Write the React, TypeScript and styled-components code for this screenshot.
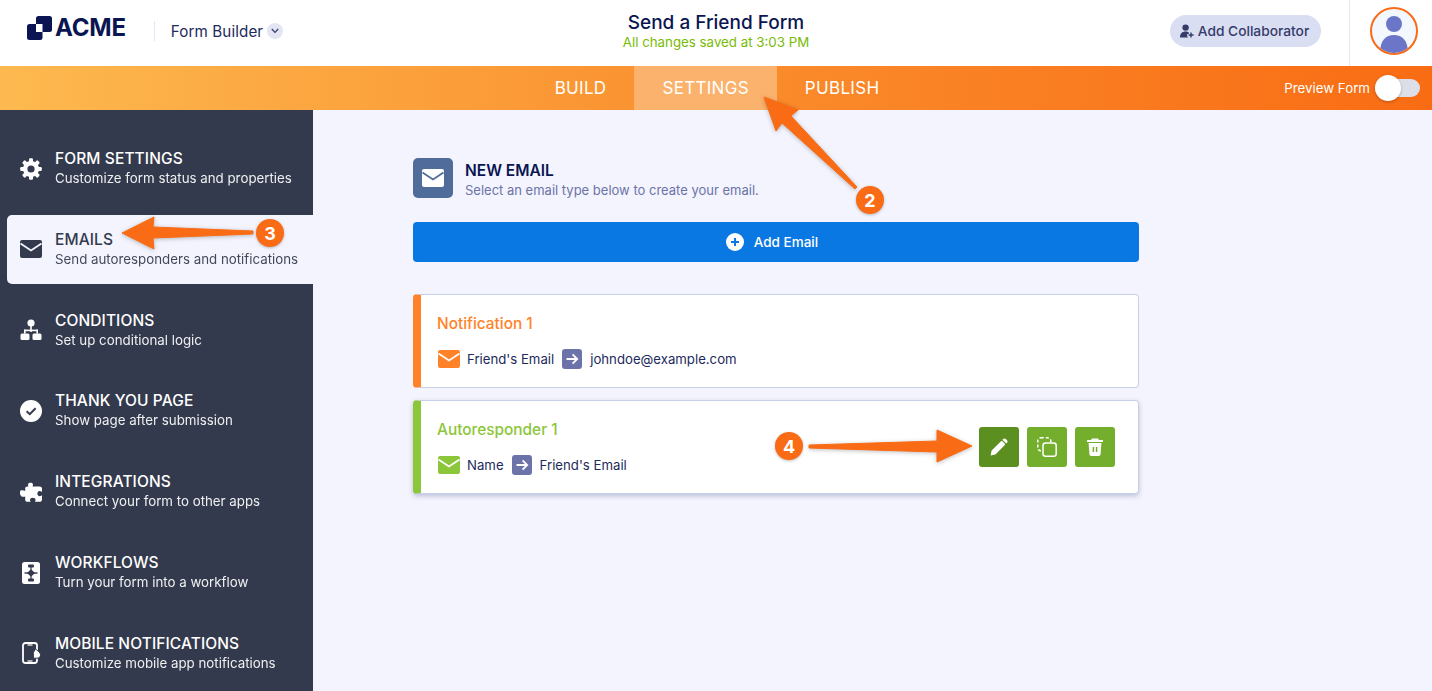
import React from 'react';
import styled, { createGlobalStyle } from 'styled-components';

const GlobalStyle = createGlobalStyle`
  html, body {
    margin: 0;
    padding: 0;
    height: 100%;
    background: #f3f4fd;
    font-family: Inter, "Liberation Sans", sans-serif;
    overflow: hidden;
  }
`;

const Page = styled.div`
  position: relative;
  width: 1432px;
  height: 691px;
  overflow: hidden;
  display: flex;
  flex-direction: column;
`;

/* ---------- header ---------- */

const Header = styled.header`
  height: 66px;
  flex: none;
  background: #fff;
  display: grid;
  grid-template-columns: 1fr auto 1fr;
  align-items: center;
`;

const Brand = styled.div`
  display: flex;
  align-items: center;
  padding: 0 0 4px 27px;
`;

const Logo = styled.div`
  display: flex;
  align-items: center;
  margin-bottom: 6px;
`;

const LogoWord = styled.span`
  font-size: 24px;
  font-weight: 700;
  letter-spacing: -0.2px;
  color: #0a1551;
  margin-left: 3px;
  line-height: 1;
`;

const BrandDivider = styled.span`
  width: 1px;
  height: 20px;
  background: #e3e5f3;
  margin-left: 28px;
`;

const ProductName = styled.span`
  margin-left: 16px;
  font-size: 15.2px;
  letter-spacing: 0.1px;
  color: #1d2a5c;
`;

const Chevron = styled.span`
  margin-left: 4px;
  width: 16px;
  height: 16px;
  border-radius: 50%;
  background: #e3e5f3;
  display: flex;
  align-items: center;
  justify-content: center;
`;

const TitleBlock = styled.div`
  text-align: center;
  padding-bottom: 3px;
`;

const FormTitle = styled.div`
  font-size: 19px;
  font-weight: 500;
  color: #0a1551;
  line-height: 22px;
`;

const SavedNote = styled.div`
  font-size: 13.3px;
  color: #78bb07;
  line-height: 17px;
`;

const HeaderRight = styled.div`
  display: flex;
  justify-content: flex-end;
  align-items: center;
  height: 100%;
`;

const Collaborator = styled.button`
  height: 32px;
  width: 151px;
  margin-bottom: 4px;
  border: 0;
  border-radius: 16px;
  background: #dadef3;
  color: #343c6a;
  font: 500 13.75px Inter, "Liberation Sans", sans-serif;
  display: flex;
  align-items: center;
  justify-content: center;
  gap: 4px;
  padding: 0 2px 0 0;
`;

const AvatarCell = styled.div`
  margin-left: 28px;
  width: 83px;
  height: 100%;
  border-left: 1px solid #e3e5f0;
  display: flex;
  align-items: center;
  justify-content: center;
  padding: 0 0 4px 6px;
  box-sizing: border-box;
`;

const Avatar = styled.div`
  width: 48px;
  height: 48px;
  border-radius: 50%;
  border: 2px solid #f96b14;
  box-sizing: border-box;
  overflow: hidden;
  background: #f3f8ff;
`;

/* ---------- tab bar ---------- */

const TabBar = styled.nav`
  height: 44px;
  flex: none;
  background: linear-gradient(90deg, #fdb94f 0%, #fa8a2a 55%, #f96c14 100%);
  display: grid;
  grid-template-columns: 1fr auto 1fr;
`;

const Tabs = styled.div`
  grid-column: 2;
  display: flex;
  margin-left: 2px;
`;

const Tab = styled.div<{ $active?: boolean }>`
  padding: 0 28px;
  display: flex;
  align-items: center;
  font-size: 17px;
  color: #fff;
  letter-spacing: 0.3px;
  background: ${(p) => (p.$active ? '#fbb26c' : 'transparent')};
`;

const PreviewToggle = styled.div`
  display: flex;
  align-items: center;
  justify-content: flex-end;
  padding-right: 12px;
  gap: 5px;
`;

const PreviewLabel = styled.span`
  font-size: 13.3px;
  color: #fff;
`;

const ToggleTrack = styled.span`
  position: relative;
  width: 45px;
  height: 18px;
  border-radius: 9px;
  background: #dcdfe8;
`;

const ToggleKnob = styled.span`
  position: absolute;
  left: 0;
  top: -4px;
  width: 26px;
  height: 26px;
  border-radius: 50%;
  background: #fff;
  box-shadow: 0 1px 3px rgba(0, 0, 0, 0.25);
`;

/* ---------- body ---------- */

const Body = styled.div`
  flex: 1;
  display: flex;
  min-height: 0;
`;

const Sidebar = styled.aside`
  width: 313px;
  flex: none;
  background: #343a4d;
  padding-top: 24px;
  display: flex;
  flex-direction: column;
  gap: 11.83px;
  box-sizing: border-box;
`;

const SideItem = styled.div<{ $active?: boolean }>`
  height: 69px;
  flex: none;
  margin-left: 7px;
  padding-left: 13px;
  box-sizing: border-box;
  display: flex;
  align-items: center;
  gap: 13px;
  border-radius: 5px 0 0 5px;
  background: ${(p) => (p.$active ? '#f3f4fd' : 'transparent')};
  color: ${(p) => (p.$active ? '#343a4d' : '#fff')};
`;

const SideIcon = styled.span`
  width: 22px;
  height: 22px;
  display: flex;
  align-items: center;
  justify-content: center;
`;

const SideTitle = styled.div`
  font-size: 15.5px;
  font-weight: 500;
  letter-spacing: 0.1px;
  line-height: 20px;
`;

const SideText = styled.div`
  font-size: 13.3px;
  line-height: 19px;
  opacity: 0.92;
`;

const Main = styled.main`
  flex: 1;
  padding: 48px 0 0 100px;
`;

const Column = styled.div`
  width: 726px;
`;

const EmailHead = styled.div`
  height: 40px;
  display: flex;
  align-items: flex-start;
  gap: 12px;
`;

const HeadIcon = styled.div`
  width: 40px;
  height: 40px;
  border-radius: 5px;
  background: #4f6c9b;
  display: flex;
  align-items: center;
  justify-content: center;
`;

const HeadCopy = styled.div`
  padding-top: 3px;
`;

const HeadTitle = styled.div`
  font-size: 15.5px;
  font-weight: 600;
  color: #0a1551;
  line-height: 19px;
`;

const HeadText = styled.div`
  font-size: 13px;
  color: #6c73a8;
  line-height: 20px;
`;

const AddButton = styled.button`
  margin-top: 24px;
  width: 100%;
  height: 40px;
  border: 0;
  padding: 0 8px 0 0;
  border-radius: 4px;
  background: #0a78e2;
  color: #fff;
  font: 500 13.5px Inter, "Liberation Sans", sans-serif;
  display: flex;
  align-items: center;
  justify-content: center;
  gap: 10px;
`;

const Card = styled.div<{ $accent: string; $raised?: boolean }>`
  height: 94px;
  box-sizing: border-box;
  background: #fff;
  border: 1px solid #c8cfe8;
  border-left: 8px solid ${(p) => p.$accent};
  border-radius: 4px;
  padding-left: 16px;
  display: flex;
  align-items: center;
  justify-content: space-between;
  box-shadow: ${(p) => (p.$raised ? '0 2px 5px rgba(60, 70, 130, 0.3)' : 'none')};
`;

const CardList = styled.div`
  margin-top: 32px;
  display: flex;
  flex-direction: column;
  gap: 12px;
`;

const CardTitle = styled.div<{ $color: string }>`
  font-size: 15.4px;
  font-weight: 500;
  color: ${(p) => p.$color};
  line-height: 20px;
`;

const FlowRow = styled.div`
  margin-top: 15px;
  padding-left: 1px;
  display: flex;
  align-items: center;
  gap: 7px;
  font-size: 13.2px;
  color: #1d2a5c;
`;

const FlowArrow = styled.span`
  width: 20px;
  height: 20px;
  border-radius: 3px;
  background: #6c73a8;
  display: flex;
  align-items: center;
  justify-content: center;
  margin: 0 1px;
`;

const Actions = styled.div`
  display: flex;
  gap: 8px;
  padding-right: 23px;
`;

const ActionButton = styled.span<{ $dark?: boolean }>`
  width: 40px;
  height: 40px;
  border-radius: 3px;
  background: ${(p) => (p.$dark ? '#5b9021' : '#74ae2d')};
  display: flex;
  align-items: center;
  justify-content: center;
`;

/* ---------- annotations, they sit over the page ---------- */

const ArrowLayer = styled.svg`
  position: absolute;
  left: 0;
  top: 0;
  pointer-events: none;
  filter: drop-shadow(0 1px 2px rgba(0, 0, 0, 0.25));
`;

const StepBadge = styled.span<{ $x: number; $y: number }>`
  position: absolute;
  left: ${(p) => p.$x - 14}px;
  top: ${(p) => p.$y - 14}px;
  width: 28px;
  height: 28px;
  border-radius: 50%;
  background: #f96b14;
  color: #fff;
  font-size: 18px;
  font-weight: 700;
  display: flex;
  align-items: center;
  justify-content: center;
  box-shadow: 0 1px 3px rgba(0, 0, 0, 0.25);
`;

/* ---------- icons ---------- */

function MailIcon({ width, bg, fg }: { width: number; bg: string; fg: string }) {
  const height = (width * 18) / 22;
  return (
    <svg width={width} height={height} viewBox="0 0 22 18">
      <rect width="22" height="18" rx="2" fill={bg} />
      <path d="M0.5 3.5 L11 10.5 L21.5 3.5" fill="none" stroke={fg} strokeWidth="1.8" />
    </svg>
  );
}

function LogoMark() {
  return (
    <svg width="25" height="24" viewBox="0 0 25 24">
      <rect x="9" y="0" width="16" height="16" rx="2.5" fill="#0a1551" />
      <rect x="0" y="8" width="15.5" height="16" rx="2.5" fill="#0a1551" />
      <rect x="9" y="8" width="6.5" height="8" fill="#fff" />
    </svg>
  );
}

function GearIcon() {
  return (
    <svg width="22" height="22" viewBox="0 0 22 22">
      <g fill="currentColor">
        <circle cx="11" cy="11" r="8" />
        {[0, 45, 90, 135, 180, 225, 270, 315].map((a) => (
          <rect key={a} x="9" y="0.2" width="4" height="5" rx="1.2" transform={`rotate(${a} 11 11)`} />
        ))}
      </g>
      <circle cx="11" cy="11" r="3.6" fill="#343a4d" />
    </svg>
  );
}

function ConditionsIcon() {
  return (
    <svg width="22" height="22" viewBox="0 0 22 22">
      <g fill="currentColor">
        <circle cx="11" cy="4" r="3.6" />
        <rect x="10.2" y="6" width="1.6" height="7" />
        <rect x="4" y="10.6" width="14" height="1.6" />
        <rect x="4" y="10.6" width="1.6" height="4" />
        <rect x="16.4" y="10.6" width="1.6" height="4" />
        <rect x="0.5" y="14.5" width="9" height="6.5" rx="1.5" />
        <rect x="12.5" y="14.5" width="9" height="6.5" rx="1.5" />
      </g>
    </svg>
  );
}

function CheckIcon() {
  return (
    <svg width="22" height="22" viewBox="0 0 22 22">
      <circle cx="11" cy="11" r="11" fill="currentColor" />
      <path d="M6.6 11.2 L9.8 14.2 L15.6 8.2" fill="none" stroke="#343a4d" strokeWidth="2" />
    </svg>
  );
}

function PuzzleIcon() {
  return (
    <svg width="22" height="22" viewBox="0 0 22 22">
      <path
        fill="currentColor"
        d="M8 3.6 C8 1 13 1 13 3.6 C13 4.4 12.6 4.8 12.6 5.4 H19.5 C21 5.4 22 6.2 22 7.6 V11 C21 10.4 20.4 10 19.6 10 C16.6 10 16.6 15.2 19.6 15.2 C20.4 15.2 21 14.8 22 14.2 V18.5 C22 20 21 20.8 19.5 20.8 H15 C15.4 19.8 15.6 19.4 15.6 18.8 C15.6 16 10 16 10 18.8 C10 19.4 10.2 19.8 10.6 20.8 H7.4 C6 20.8 5.2 20 5.2 18.5 V15.4 C4.4 15.4 4 15.8 3.2 15.8 C0 15.8 -1 11 0.6 9.6 C1.6 8.8 4 9.2 5.2 10 V7.6 C5.2 6.2 6 5.4 7.4 5.4 H8.4 C8.4 4.8 8 4.4 8 3.6 Z"
      />
    </svg>
  );
}

function WorkflowIcon() {
  return (
    <svg width="18" height="22" viewBox="0 0 18 22">
      <rect width="18" height="22" rx="2.5" fill="currentColor" />
      <g fill="#343a4d">
        <rect x="6" y="2.5" width="6" height="3" rx="1" />
        <rect x="8.4" y="5" width="1.2" height="12" />
        <path d="M9 7.2 L13 11 L9 14.8 L5 11 Z" />
        <rect x="6" y="16.5" width="6" height="3" rx="1" />
        <rect x="2.5" y="10.3" width="13" height="1.4" />
      </g>
    </svg>
  );
}

function MobileIcon() {
  return (
    <svg width="20" height="22" viewBox="0 0 20 22">
      <rect x="2" y="1" width="14" height="20" rx="2.5" fill="none" stroke="currentColor" strokeWidth="1.8" />
      <rect x="6.5" y="2.4" width="5" height="1.2" fill="currentColor" />
      <rect x="6.5" y="18.4" width="5" height="1.2" fill="currentColor" />
      <path
        fill="currentColor"
        stroke="#343a4d"
        strokeWidth="1"
        d="M14.6 6.8 C15.6 8.2 19.6 10.4 19.6 12.8 C19.6 14.8 18 16.2 16 16.2 H12.4 V11.5 C12.4 10 13.6 8.4 14.6 6.8 Z"
      />
    </svg>
  );
}

function PersonPlusIcon() {
  return (
    <svg width="14" height="14" viewBox="0 0 14 14">
      <g fill="#343c6a">
        <circle cx="5.6" cy="3.6" r="3.2" />
        <path d="M0 13.6 C0 9.6 2.2 7.6 5.6 7.6 C7 7.6 8 7.9 8.8 8.6 L8.8 10 L7.2 10 L7.2 12.4 L8.2 13.6 Z" />
        <path d="M10.3 8.6 H11.7 V10.3 H13.6 V11.7 H11.7 V13.6 H10.3 V11.7 H8.6 V10.3 H10.3 Z" />
      </g>
    </svg>
  );
}

function PlusCircle() {
  return (
    <svg width="18" height="18" viewBox="0 0 18 18">
      <circle cx="9" cy="9" r="9" fill="#fff" />
      <path d="M9 5 V13 M5 9 H13" stroke="#0a78e2" strokeWidth="2" />
    </svg>
  );
}

function RightArrow() {
  return (
    <svg width="14" height="14" viewBox="0 0 14 14">
      <path d="M1.5 7 H12 M7.6 2.4 L12.2 7 L7.6 11.6" fill="none" stroke="#fff" strokeWidth="1.8" />
    </svg>
  );
}

function PencilIcon() {
  return (
    <svg width="18" height="18" viewBox="0 0 18 18">
      <path fill="#fff" d="M0.6 17.4 L1.6 12.6 L10.8 3.4 C11.4 2.8 12 2.8 12.6 3.4 L14.6 5.4 C15.2 6 15.2 6.6 14.6 7.2 L5.4 16.4 Z" />
      <path fill="#fff" d="M12.4 1.8 L13.2 1 C14 0.2 15 0.2 15.8 1 L17 2.2 C17.8 3 17.8 4 17 4.8 L16.2 5.6 Z" />
    </svg>
  );
}

function DuplicateIcon() {
  return (
    <svg width="20" height="20" viewBox="0 0 20 20">
      <rect x="0.8" y="0.8" width="13" height="13" rx="3" fill="none" stroke="#fff" strokeWidth="1.5" strokeDasharray="3 2" />
      <rect x="6" y="6" width="13.2" height="13.2" rx="2.5" fill="#74ae2d" stroke="#fff" strokeWidth="1.5" />
    </svg>
  );
}

function TrashIcon() {
  return (
    <svg width="16" height="18" viewBox="0 0 16 18">
      <path fill="#fff" d="M5 0.4 H11 L12 2 H15 C15.7 2 16 2.4 16 3 V4 H0 V3 C0 2.4 0.3 2 1 2 H4 Z" />
      <path fill="#fff" d="M1.6 5 H14.4 L13.6 16 C13.5 17.2 12.8 18 11.6 18 H4.4 C3.2 18 2.5 17.2 2.4 16 Z" />
      <path d="M6.4 9 V14 M9.6 9 V14" stroke="#74ae2d" strokeWidth="1.5" />
    </svg>
  );
}

const sideItems = [
  { title: 'FORM SETTINGS', text: 'Customize form status and properties', icon: <GearIcon /> },
  {
    title: 'EMAILS',
    text: 'Send autoresponders and notifications',
    icon: <MailIcon width={22} bg="#343a4d" fg="#f3f4fd" />,
    active: true,
  },
  { title: 'CONDITIONS', text: 'Set up conditional logic', icon: <ConditionsIcon /> },
  { title: 'THANK YOU PAGE', text: 'Show page after submission', icon: <CheckIcon /> },
  { title: 'INTEGRATIONS', text: 'Connect your form to other apps', icon: <PuzzleIcon /> },
  { title: 'WORKFLOWS', text: 'Turn your form into a workflow', icon: <WorkflowIcon /> },
  { title: 'MOBILE NOTIFICATIONS', text: 'Customize mobile app notifications', icon: <MobileIcon /> },
];

export default function App() {
  return (
    <Page>
      <GlobalStyle />

      <Header>
        <Brand>
          <Logo>
            <LogoMark />
            <LogoWord>ACME</LogoWord>
          </Logo>
          <BrandDivider />
          <ProductName>Form Builder</ProductName>
          <Chevron>
            <svg width="8" height="6" viewBox="0 0 8 6">
              <path d="M0.8 1 L4 4.4 L7.2 1" fill="none" stroke="#343c6a" strokeWidth="1.2" />
            </svg>
          </Chevron>
        </Brand>
        <TitleBlock>
          <FormTitle>Send a Friend Form</FormTitle>
          <SavedNote>All changes saved at 3:03 PM</SavedNote>
        </TitleBlock>
        <HeaderRight>
          <Collaborator>
            <PersonPlusIcon />
            Add Collaborator
          </Collaborator>
          <AvatarCell>
            <Avatar>
              <svg width="44" height="44" viewBox="0 0 44 44">
                <circle cx="22" cy="15" r="8" fill="#6c76c8" />
                <path d="M8 44 C8 31 14 26 22 26 C30 26 36 31 36 44 Z" fill="#6c76c8" />
              </svg>
            </Avatar>
          </AvatarCell>
        </HeaderRight>
      </Header>

      <TabBar>
        <Tabs>
          <Tab>BUILD</Tab>
          <Tab $active>SETTINGS</Tab>
          <Tab>PUBLISH</Tab>
        </Tabs>
        <PreviewToggle>
          <PreviewLabel>Preview Form</PreviewLabel>
          <ToggleTrack>
            <ToggleKnob />
          </ToggleTrack>
        </PreviewToggle>
      </TabBar>

      <Body>
        <Sidebar>
          {sideItems.map((item) => (
            <SideItem key={item.title} $active={item.active}>
              <SideIcon>{item.icon}</SideIcon>
              <div>
                <SideTitle>{item.title}</SideTitle>
                <SideText>{item.text}</SideText>
              </div>
            </SideItem>
          ))}
        </Sidebar>

        <Main>
          <Column>
            <EmailHead>
              <HeadIcon>
                <MailIcon width={22} bg="#fff" fg="#4f6c9b" />
              </HeadIcon>
              <HeadCopy>
                <HeadTitle>NEW EMAIL</HeadTitle>
                <HeadText>Select an email type below to create your email.</HeadText>
              </HeadCopy>
            </EmailHead>

            <AddButton>
              <PlusCircle />
              Add Email
            </AddButton>

            <CardList>
              <Card $accent="#ff8228">
                <div>
                  <CardTitle $color="#ff8228">Notification 1</CardTitle>
                  <FlowRow>
                    <MailIcon width={22} bg="#ff8228" fg="#fff" />
                    Friend's Email
                    <FlowArrow>
                      <RightArrow />
                    </FlowArrow>
                    johndoe@example.com
                  </FlowRow>
                </div>
              </Card>

              <Card $accent="#8cc63a" $raised>
                <div>
                  <CardTitle $color="#8cc63a">Autoresponder 1</CardTitle>
                  <FlowRow>
                    <MailIcon width={22} bg="#8cc63a" fg="#fff" />
                    Name
                    <FlowArrow>
                      <RightArrow />
                    </FlowArrow>
                    Friend's Email
                  </FlowRow>
                </div>
                <Actions>
                  <ActionButton $dark>
                    <PencilIcon />
                  </ActionButton>
                  <ActionButton>
                    <DuplicateIcon />
                  </ActionButton>
                  <ActionButton>
                    <TrashIcon />
                  </ActionButton>
                </Actions>
              </Card>
            </CardList>
          </Column>
        </Main>
      </Body>

      <ArrowLayer width="1432" height="691" viewBox="0 0 1432 691">
        <g fill="#f96b14" stroke="#f96b14" strokeWidth="1" strokeLinejoin="round">
          <polygon points="764,97 798,110 791,116 857,187 855,189 782,123 776,131" />
          <polygon points="122,233 154,217 153,227 253,231 253,234 153,238 154,249" />
          <polygon points="809,445 937,441 937,430 972,446 937,462 937,452 809,448" />
        </g>
      </ArrowLayer>
      <StepBadge $x={870} $y={200}>2</StepBadge>
      <StepBadge $x={270} $y={233}>3</StepBadge>
      <StepBadge $x={789} $y={446}>4</StepBadge>
    </Page>
  );
}
